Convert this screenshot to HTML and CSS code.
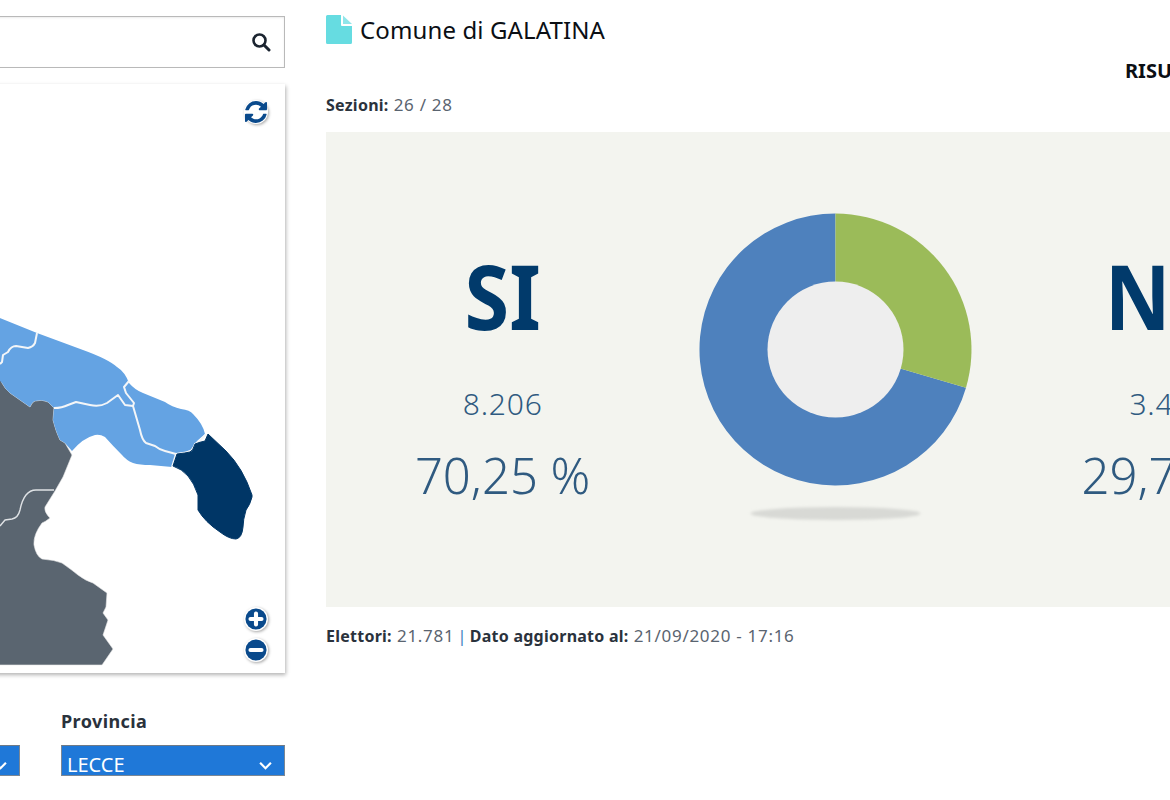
FILE: index.html
```html
<!DOCTYPE html>
<html lang="it">
<head>
<meta charset="utf-8">
<title>Comune di GALATINA</title>
<link rel="stylesheet" href="styles.css">
</head>
<body>
<div class="page">
  <aside class="left">
    <div class="search">
      <svg class="search-icon" viewBox="0 0 20 20"><circle cx="8.5" cy="8.5" r="6" fill="none" stroke="#1b2430" stroke-width="2.6"/><path d="M13 13l5 5" stroke="#1b2430" stroke-width="3" stroke-linecap="round"/></svg>
    </div>
    <div class="map-card">
      <svg class="map" viewBox="-204 84 489 589">
        <path class="gray" d="M-204 665V300L0 377 2 383Q5 389 10 393 20 400 30 407 32 402 35 401 42 399 48 402L54 408 53 420Q56 432 60 440L65 443 72 455 63 477 55 491 45 507Q44 512 50 518 45 522 42 523 33 535 34 545 36 556 42 559 55 560 62 563 72 570 78 575 86 581 93 583 100 588 107 593L106 607 103 613 108 620 103 635 113 649 102 665Z"/>
        <path class="inner" d="M54 490H36Q30 490 26 495 22 500 20 510 18 518 12 519L5 520 0 526"/>
        <path class="blue" d="M-10 314 37 333 83 350Q108 359 117 367 125 372 129 383 135 390 143 393L165 402Q172 407 181 409 190 410 193 414 203 424 205 434L197 441 190 451 176 454 172 467 150 465Q140 465 133 463 126 460 122 455 113 446 105 437 100 434 95 435 83 438 72 451L65 443 60 440Q56 432 53 420L54 408 48 402Q42 399 35 401 32 402 30 407 20 400 10 393 5 389 2 383L-10 370Z"/>
        <path class="line" d="M37 333 35 343Q33 347 28 348L16 346Q11 346 8 352L3 355 2 362 0 364"/>
        <path class="line" d="M54 408Q62 408 68 405L76 402 90 405Q100 407 107 403L118 395 125 405 133 406"/>
        <path class="line" d="M129 381 124 387 126 393 134 403 133 406 140 430Q142 440 146 443L155 446Q160 450 165 451L176 454 172 467"/>
        <path class="line" d="M176 454Q186 453 190 451 193 450 195 444 200 442 206 434"/>
        <path class="dark" d="M208 434 226 451Q243 468 252 495V497Q250 505 246 510 243 520 243 527 242 538 236 539 229 539 220 532 205 522 198 510V495Q194 483 188 476 182 469 173 466L177 454Q186 453 190 452 193 451 195 444 200 442 205 441Z"/>
      </svg>
      <span class="map-btn refresh">
        <svg viewBox="0 0 1536 1536"><path fill="#0a4a8c" d="M1511 928q0 5-1 7-64 268-268 434.500t-478 166.500q-146 0-282.500-55t-243.500-157l-129 129q-19 19-45 19t-45-19-19-45v-448q0-26 19-45t45-19h448q26 0 45 19t19 45-19 45l-137 137q71 66 161 102t187 36q134 0 250-65t186-179q11-17 53-117 8-23 30-23h192q13 0 22.500 9.500t9.500 22.500zm25-800v448q0 26-19 45t-45 19h-448q-26 0-45-19t-19-45 19-45l138-138q-148-137-349-137-134 0-250 65t-186 179q-11 17-53 117-8 23-30 23h-199q-13 0-22.500-9.500t-9.500-22.500v-7q65-268 270-434.500t480-166.500q146 0 284 55.500t245 156.500l130-129q19-19 45-19t45 19 19 45z"/></svg>
      </span>
      <span class="map-btn plus">
        <svg viewBox="0 0 24 24"><circle cx="12" cy="12" r="11.500" fill="#0a4a8c"/><path d="M12 6v12M6 12h12" stroke="#fff" stroke-width="4.500" stroke-linecap="round"/></svg>
      </span>
      <span class="map-btn minus">
        <svg viewBox="0 0 24 24"><circle cx="12" cy="12" r="11.500" fill="#0a4a8c"/><path d="M6 12h12" stroke="#fff" stroke-width="4.500" stroke-linecap="round"/></svg>
      </span>
    </div>
    <div class="filters">
      <div class="filter">
        <div class="filter-label">Regione</div>
        <div class="select"><span>PUGLIA</span><svg viewBox="0 0 12 8"><path d="M1 1.500l5 5 5-5" fill="none" stroke="#fff" stroke-width="2"/></svg></div>
      </div>
      <div class="filter">
        <div class="filter-label">Provincia</div>
        <div class="select"><span>LECCE</span><svg viewBox="0 0 12 8"><path d="M1 1.500l5 5 5-5" fill="none" stroke="#fff" stroke-width="2"/></svg></div>
      </div>
    </div>
  </aside>
  <main class="right">
    <h1 class="title">
      <svg class="doc" viewBox="0 0 26 29"><path fill="#66dce1" d="M0 1.500Q0 0 1.500 0H15V10Q15 11 16 11H26V27.500Q26 29 24.500 29H1.500Q0 29 0 27.500Z"/><path fill="#8fe6ea" d="M17 0.500 26 9H17Z"/></svg>
      Comune di GALATINA
    </h1>
    <div class="tabs">RISULTATI</div>
    <p class="meta"><b>Sezioni:</b> 26 / 28</p>
    <section class="panel">
      <div class="stat">
        <div class="stat-name">SI</div>
        <div class="stat-votes">8.206</div>
        <div class="stat-pct">70,25 %</div>
      </div>
      <svg class="chart" viewBox="0 0 333 340">
        <defs><filter id="blur" x="-20%" y="-100%" width="140%" height="300%"><feGaussianBlur stdDeviation="1.500"/></filter></defs>
        <path fill="#4e81bd" d="M166.500 .5A136 136 0 1 0 297 174.700L166.500 136.500Z"/>
        <path fill="#9bbb59" d="M166.500 .5A136 136 0 0 1 297 174.700L166.500 136.500Z"/>
        <circle cx="166.500" cy="136.500" r="68" fill="#eee"/>
        <ellipse cx="166.500" cy="300.500" rx="85" ry="6.500" fill="#d8d9d5" filter="url(#blur)"/>
      </svg>
      <div class="stat">
        <div class="stat-name">NO</div>
        <div class="stat-votes">3.475</div>
        <div class="stat-pct">29,75 %</div>
      </div>
    </section>
    <p class="meta foot"><b>Elettori:</b> 21.781<span class="sep">|</span><b>Dato aggiornato al:</b> 21/09/2020 - 17:16</p>
  </main>
</div>
</body>
</html>
```

FILE: styles.css
```css
* { box-sizing: border-box; }
html, body { margin: 0; height: 800px; overflow: hidden; background: #fff; }
body { font-family: "Noto Sans", "Liberation Sans", sans-serif; color: #1b2430; }
.page { display: flex; align-items: flex-start; width: 1550px; margin-left: -204px; }
.left { width: 489px; padding-top: 16px; flex: none; }
.search { height: 52px; border: 1px solid #b9b9b9; display: flex; align-items: center; justify-content: flex-end; padding: 0 13px 0 0; box-shadow: inset 0 1px 2px rgba(0,0,0,.08); }
.search-icon { width: 20px; height: 20px; }
.map-card { position: relative; height: 589px; margin-top: 16px; background: #fff; box-shadow: 1px 2px 4px rgba(0,0,0,.3); }
.map { display: block; width: 489px; height: 589px; filter: blur(.35px); }
.gray { fill: #5a6570; stroke: #e8e8e8; stroke-width: .6; stroke-linejoin: round; }
.blue { fill: #64a3e3; stroke-linejoin: round; }
.dark { fill: #003666; stroke: #003666; stroke-linejoin: round; stroke-width: 1; }
.line, .inner { fill: none; stroke: #f4f6f8; stroke-width: 2; stroke-linejoin: round; }
.inner { stroke-width: 1.400; stroke: #dfe2e5; }
.map-btn { position: absolute; right: 17px; width: 24px; height: 24px; border-radius: 50%; background: #fff; box-shadow: 1px 1px 3px rgba(0,0,0,.35); display: flex; align-items: center; justify-content: center; }
.map-btn svg { width: 22px; height: 22px; display: block; }
.refresh { top: 16px; }
.plus { top: 523px; }
.minus { top: 554px; }
.filters { display: grid; grid-template-columns: 224px 224px; column-gap: 41px; margin-top: 36px; }
.filter-label { font-size: 18px; font-weight: 700; letter-spacing: .4px; line-height: 24px; height: 36px; color: #2a323c; }
.select { height: 31px; overflow: hidden; background: #1f78d8; border: 1px solid #7b8794; border-top-color: #6f7a86; color: #fff; font-size: 20px; line-height: 37px; padding-left: 5px; display: flex; justify-content: space-between; }
.select svg { width: 13px; height: 9px; margin: 15px 12px 0 0; flex: none; }
.right { width: 1020px; flex: none; margin-left: 41px; padding-top: 14px; }
.title { margin: 0; height: 30px; display: flex; align-items: center; gap: 8px; font-size: 24px; font-weight: 400; letter-spacing: .12px; color: #0b0f14; white-space: nowrap; }
.doc { width: 26px; height: 29px; flex: none; }
.tabs { margin: 14px 0 0 799px; font-size: 20px; font-weight: 700; line-height: 26px; color: #0b0f14; white-space: nowrap; }
.meta { margin: 9px 0 0; font-size: 17px; letter-spacing: .7px; line-height: 24px; color: #5a6470; white-space: nowrap; }
.meta b { color: #2a323c; font-size: 16px; font-weight: 700; letter-spacing: .25px; }
.sep { color: #3f7fc0; letter-spacing: 0; margin: 0 3px; }
.panel { display: grid; grid-template-columns: repeat(3, 1fr); margin-top: 15px; padding: 81px 10px 0; height: 475px; background: #f3f4ef; }
.stat { text-align: center; color: #2f5a80; padding-top: 27px; }
.stat-name { font-size: 90px; font-weight: 700; line-height: 110px; color: #013a6b; transform: scaleX(.9); }
.stat-votes { font-size: 30px; font-weight: 300; letter-spacing: .8px; line-height: 40px; margin-top: 34px; }
.stat-pct { font-size: 49px; font-weight: 300; line-height: 60px; margin-top: 21px; }
.chart { width: 333px; height: 340px; display: block; }
.foot { margin-top: 17px; }
```
